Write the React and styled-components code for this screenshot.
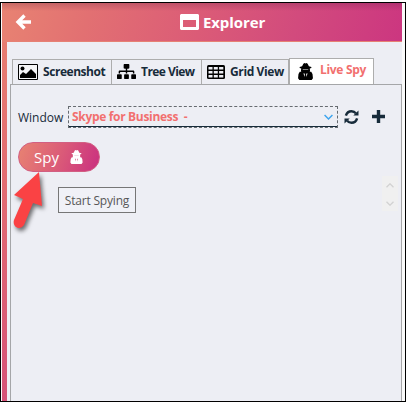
import React from 'react';
import styled, { createGlobalStyle } from 'styled-components';
import { FaSitemap } from 'react-icons/fa';

const Global = createGlobalStyle`
  * { box-sizing: border-box; }
  html, body { margin: 0; width: 406px; height: 402px; overflow: hidden; background: #fff; }
  body { font-family: "Open Sans", "Noto Sans", sans-serif; color: #172b3a; }
  svg { display: block; flex: none; }
`;

const Frame = styled.div`
  position: relative;
  width: 406px;
  height: 400px;
  margin-top: 2px;
  border: 1px solid #000;
  padding: 0 3px 0 1px;
  background: #fafafa;
`;

const Window = styled.div`
  height: 398px;
  padding-left: 5px;
  background: linear-gradient(180deg, #e77c70 0%, #e77c70 10%, #e26c72 45%, #d65278 100%);
`;

const Header = styled.header`
  display: flex;
  align-items: center;
  height: 39px;
  margin-left: -5px;
  padding: 0 0 1px 13px;
  color: #fff;
  border-bottom: 1px solid #e68174;
  background:
    linear-gradient(180deg, rgba(80, 25, 60, .22), transparent 8px),
    linear-gradient(105deg, #e88372 0%, #e27072 22%, #db5b77 50%, #d24b7d 73%, #cc3680 100%);
`;

const Title = styled.h1`
  display: flex;
  align-items: center;
  gap: 4px;
  margin: 0 0 0 148px;
  font-size: 15px;
  line-height: 20px;
  font-weight: 700;
  letter-spacing: ${p => p.$track}px;
`;

const Body = styled.main`
  height: 359px;
  padding: 15px 0 0 3px;
  background: #edeef4;
`;

const Tabs = styled.nav`
  display: flex;
  align-items: flex-end;
  height: 27px;
  padding-left: 2px;
`;

const Tab = styled.div`
  display: flex;
  align-items: center;
  gap: ${p => p.$gap}px;
  width: ${p => p.$width}px;
  height: ${p => (p.$active ? 26 : 25)}px;
  padding: 0 0 1px ${p => p.$pad}px;
  border: 1px solid #adadad;
  border-bottom: 0;
  border-left-width: ${p => (p.$joined ? 0 : 1)}px;
  background: ${p => (p.$active ? '#fff' : '#edeef4')};
  color: #000;
`;

const TabText = styled.span`
  padding-bottom: ${p => (p.$active ? 2 : 0)}px;
  font-size: 12px;
  line-height: 18px;
  font-weight: 700;
  white-space: nowrap;
  letter-spacing: ${p => p.$track}px;
  color: ${p => (p.$active ? '#f2706f' : '#172b3a')};
`;

const Panel = styled.section`
  height: 317px;
  border: 1px solid #a5a6a8;
  border-bottom: 0;
  padding: 21px 0 0 7px;
`;

const WindowRow = styled.div`
  display: flex;
  align-items: center;
  height: 22px;
`;

const Label = styled.span`
  width: 50px;
  font-size: 12px;
  letter-spacing: ${p => p.$track}px;
  white-space: nowrap;
`;

const Select = styled.div`
  display: flex;
  align-items: center;
  justify-content: space-between;
  width: 270px;
  height: 22px;
  padding: 0 4px 0 3px;
  border: 1px dashed #666b70;
  box-shadow: inset 0 -1px 0 #172b3a;
`;

const SelectText = styled.span`
  font-size: 12px;
  line-height: 18px;
  font-weight: 700;
  color: #f2706f;
  white-space: pre;
  letter-spacing: ${p => p.$track}px;
`;

const Actions = styled.div`
  display: flex;
  align-items: center;
  gap: 13px;
  margin-left: 6px;
  padding-bottom: 1px;
`;

const SpyButton = styled.button`
  display: flex;
  align-items: center;
  gap: 11px;
  width: 82px;
  height: 30px;
  margin: 14px 0 0;
  padding: 0 0 1px 15px;
  border: 1px solid #d25f82;
  border-radius: 15px;
  color: #fff;
  font: 400 15px/20px "Open Sans", sans-serif;
  background: linear-gradient(110deg, #e78072 5%, #db5c78 50%, #cb327f 95%) border-box;
`;

const Tooltip = styled.div`
  position: absolute;
  left: 57px;
  top: 184px;
  display: flex;
  align-items: center;
  justify-content: center;
  width: 78px;
  height: 26px;
  border: 1px solid #767676;
  background: #f0f1f7;
  color: #575757;
  font-size: 12px;
  white-space: nowrap;
  letter-spacing: ${p => p.$track}px;
`;

const Pointer = styled.svg`
  position: absolute;
  left: 7px;
  top: 163px;
  filter: drop-shadow(2px 3px 2px rgba(0, 0, 0, .55));
`;

const Scroller = styled.div`
  display: flex;
  flex-direction: column;
  align-items: center;
  justify-content: space-between;
  width: 16px;
  height: 35px;
  margin: 4px 3px 0 auto;
  padding: 7px 0 5px;
  background: #f0f0f0;
`;

const Chevron = ({ up, color, w = 8 }) => (
  <svg width={w} height={w > 8 ? 6 : 5} viewBox="0 0 8 5" fill="none" stroke={color} strokeWidth="1.3">
    <path d={up ? 'M.5 4.3 4 .8l3.5 3.5' : 'M.5.7 4 4.2 7.5.7'} />
  </svg>
);

const ArrowBack = () => (
  <svg width="17" height="16" viewBox="0 0 17 16" fill="none" stroke="#fff" strokeWidth="3.4">
    <path d="M9.5 1.5 3 8l6.5 6.5M3 8h13" />
  </svg>
);

const WindowIcon = () => (
  <svg width="19" height="16" viewBox="0 0 19 16">
    <path fill="#fff" fillRule="evenodd" d="M1 0h17l1 1v14l-1 1H1l-1-1V1zM3 6v7h13V6z" />
  </svg>
);

const PictureIcon = () => (
  <svg width="20" height="16" viewBox="0 0 20 16">
    <path d="M.5.5h19v15H.5z" fill="#f5f5f7" stroke="#000" />
    <circle cx="4.5" cy="4.5" r="2" />
    <path d="M2 14v-3l3-3 3 2 5-5 5 5v4z" />
  </svg>
);

const TableIcon = () => (
  <svg width="18" height="14" viewBox="0 0 18 14">
    <rect width="18" height="14" rx="1.5" />
    <path fill="#edeef4" d="M1.5 2h4v2.6h-4zm5.3 0h4v2.6h-4zm5.3 0h4.2v2.6h-4.2zM1.5 6h4v2.6h-4zm5.3 0h4v2.6h-4zm5.3 0h4.2v2.6h-4.2zM1.5 10h4v2.5h-4zm5.3 0h4v2.5h-4zm5.3 0h4.2v2.5h-4.2z" />
  </svg>
);

const SpyIcon = ({ w, h, cut }) => (
  <svg width={w} height={h} viewBox="0 0 14 16" fill="currentColor">
    <path d="M3.8 3 5 .6 6 0l1 .5L8 0l1 .6L10.2 3l2.3.7v1l-1.5.5.3 2-.3 1h1.4L13.6 10.4l.4 4L12.8 16H1.2L0 14.4l.4-4L1.6 8.2H3l-.3-1 .3-2-1.5-.5v-1z" />
    <path fill={cut} d="M4.4 6.2h5.2v.5H4.4zM5.2 9.6l1.2.6-.3 3-.9-3.2zM8.8 9.6l-1.2.6.3 3 .9-3.2z" />
  </svg>
);

const RefreshIcon = () => (
  <svg width="15" height="14" viewBox="0 0 14 14" fill="none" stroke="#172b3a" strokeWidth="2.4">
    <path d="M1.4 5.6C2.2 2.8 4.4 1.2 7 1.2c1.9 0 3.4.8 4.4 2.2M12.6 8.4c-.8 2.8-3 4.4-5.6 4.4-1.9 0-3.4-.8-4.4-2.2" />
    <path d="M14 .6v5H8.8zM0 13.4v-5h5.2z" fill="#172b3a" stroke="none" />
  </svg>
);

const PlusIcon = () => (
  <svg width="13" height="13" viewBox="0 0 13 13">
    <path fill="#172b3a" d="M4.8 0h3.4v4.8H13v3.4H8.2V13H4.8V8.2H0V4.8h4.8z" />
  </svg>
);

export default function App() {
  return (
    <>
      <Global />
      <Frame>
        <Window>
          <Header>
            <ArrowBack />
            <Title $track={-0.1}><WindowIcon />Explorer</Title>
          </Header>
          <Body>
            <Tabs>
              <Tab $width={100} $pad={5} $gap={5}>
                <PictureIcon /><TabText $track={-0.45}>Screenshot</TabText>
              </Tab>
              <Tab $width={90} $pad={5} $gap={5} $joined>
                <FaSitemap size={19} /><TabText $track={-0.55}>Tree View</TabText>
              </Tab>
              <Tab $width={87} $pad={5} $gap={5} $joined>
                <TableIcon /><TabText $track={-0.38}>Grid View</TabText>
              </Tab>
              <Tab $width={85} $pad={8} $gap={7} $active>
                <SpyIcon w={15} h={17} cut="#fff" /><TabText $active $track={-0.3}>Live Spy</TabText>
              </Tab>
            </Tabs>
            <Panel>
              <WindowRow>
                <Label $track={0}>Window</Label>
                <Select>
                  <SelectText $track={-0.32}>{'Skype for Business  -'}</SelectText>
                  <Chevron color="#3ca4ee" w={9} />
                </Select>
                <Actions><RefreshIcon /><PlusIcon /></Actions>
              </WindowRow>
              <SpyButton>Spy<SpyIcon w={13} h={14} cut="#dc7197" /></SpyButton>
              <Scroller><Chevron up color="#d2d2d2" /><Chevron color="#d2d2d2" /></Scroller>
            </Panel>
          </Body>
        </Window>
        <Tooltip $track={-0.2}>Start Spying</Tooltip>
        <Pointer width="40" height="70" viewBox="0 0 40 70">
          <path fill="#fa4244" d="M31 6 6 29l9 4-9 21c-2 7 6 11 10 5l9-22 9 3z" />
        </Pointer>
      </Frame>
    </>
  );
}
